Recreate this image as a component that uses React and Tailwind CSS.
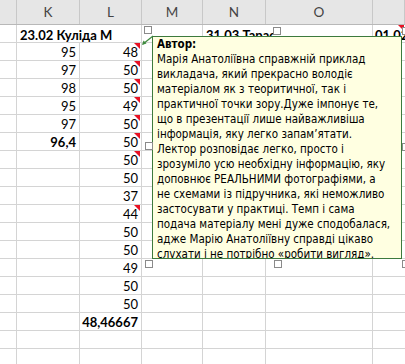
import React from 'react';

const COLS = [17, 63, 62, 61, 63, 107, 32];
const HEADERS = ['', 'K', 'L', 'M', 'N', 'O', ''];

// [K, L, hasComment, boldK, boldL]
const ROWS = [
  ['95', '48', true],
  ['97', '50', true],
  ['98', '50', true],
  ['95', '49', true],
  ['97', '50', true],
  ['96,4', '50', true, true],
  ['', '50', true],
  ['', '50'],
  ['', '37'],
  ['', '44', true],
  ['', '50'],
  ['', '50'],
  ['', '49'],
  ['', '50'],
  ['', '50'],
  ['', '48,46667', false, false, true],
  ['', ''],
  ['', ''],
];

const COMMENT = [
  'Марія Анатоліївна справжній приклад',
  'викладача, який прекрасно володіє',
  'матеріалом як з теоритичної, так і',
  'практичної точки зору.Дуже імпонує те,',
  'що в презентації лише найважливіша',
  'інформація, яку легко запам’ятати.',
  'Лектор розповідає легко, просто і',
  'зрозуміло усю необхідну інформацію, яку',
  'доповнює РЕАЛЬНИМИ фотографіями, а',
  'не схемами із підручника, які неможливо',
  'застосувати у практиці. Темп і сама',
  'подача матеріалу мені дуже сподобалася,',
  'адже Марію Анатоліївну справді цікаво',
  'слухати і не потрібно «робити вигляд».',
];

const cellFont = { fontFamily: 'Lato, "Liberation Sans", sans-serif' };

const RedMark = () => (
  <span className="absolute top-0 right-[1px] w-0 h-0 border-t-[6px] border-t-[#e81123] border-l-[6px] border-l-transparent" />
);

const Handle = ({ className }) => (
  <div className={`absolute w-[8px] h-[8px] bg-white border border-[#8a8a8a] ${className}`} />
);

export default function App() {
  return (
    <div className="relative w-[405px] h-[364px] overflow-hidden bg-white text-black" style={cellFont}>
      {/* column headers */}
      <div className="flex h-[25px] bg-[#e6e6e6] border-b border-[#b8b8b8]">
        {COLS.map((w, i) => (
          <div
            key={i}
            style={{ width: w }}
            className="shrink-0 border-r border-[#c8c8c8] flex items-center justify-center text-[13.5px] text-[#444]"
          >
            {HEADERS[i]}
          </div>
        ))}
      </div>

      {/* first row with titles */}
      <div className="flex h-[18px] text-[13px] font-bold leading-[21px]">
        <div className="w-[17px] shrink-0 border-r border-b border-[#d4d4d4]" />
        <div className="w-[125px] shrink-0 border-r border-b border-[#d4d4d4] pl-[3px] whitespace-nowrap">
          23.02 Куліда М
        </div>
        <div className="w-[61px] shrink-0 border-r border-b border-[#d4d4d4]" />
        <div className="w-[170px] shrink-0 border-r border-b border-[#d4d4d4] pl-[3px] whitespace-nowrap">
          31.03 Тарас
        </div>
        <div className="relative w-[32px] shrink-0 border-b border-[#d4d4d4] pl-[2px] whitespace-nowrap overflow-hidden">
          01.02 Ко
          <RedMark />
        </div>
      </div>

      {/* data rows */}
      {ROWS.map(([k, l, mark, boldK, boldL], r) => (
        <div key={r} className="flex h-[18px] text-[13px] leading-[19px]">
          <div className="w-[17px] shrink-0 border-r border-b border-[#d4d4d4]" />
          <div className={`w-[63px] shrink-0 border-r border-b border-[#d4d4d4] text-right pr-[3px] ${boldK ? 'font-bold' : ''}`}>
            {k}
          </div>
          <div className={`relative w-[62px] shrink-0 border-r border-b border-[#d4d4d4] text-right pr-[3px] ${boldL ? 'font-bold' : ''}`}>
            {l}
            {mark && <RedMark />}
          </div>
          <div className="w-[61px] shrink-0 border-r border-b border-[#d4d4d4]" />
          <div className="w-[63px] shrink-0 border-r border-b border-[#d4d4d4]" />
          <div className="w-[107px] shrink-0 border-r border-b border-[#d4d4d4]" />
          <div className="w-[32px] shrink-0 border-b border-[#d4d4d4]" />
        </div>
      ))}

      {/* comment arrow */}
      <svg className="absolute left-[140px] top-[34px]" width="16" height="14" viewBox="0 0 16 14">
        <line x1="3" y1="10" x2="13" y2="2" stroke="#3f8a3f" strokeWidth="1.2" />
        <polygon points="2,11 3.5,6.5 6.5,9.5" fill="#3f8a3f" />
      </svg>

      {/* comment box */}
      <div
        className="absolute left-[152px] top-[36px] w-[250px] h-[223px] overflow-hidden bg-[#ffffe1] border border-[#3d7a3d] pl-[4px] text-[11.5px] leading-[15px] text-black"
        style={{ fontFamily: '"DejaVu Sans Condensed", Tahoma, "DejaVu Sans", sans-serif' }}
      >
        <div className="font-bold">Автор:</div>
        {COMMENT.map((line, i) => (
          <div key={i} className="whitespace-nowrap">
            {line}
          </div>
        ))}
      </div>

      {/* selection handles */}
      <Handle className="left-[144px] top-[26px]" />
      <Handle className="left-[273px] top-[27px]" />
      <Handle className="left-[402px] top-[27px]" />
      <Handle className="left-[145px] top-[142px]" />
      <Handle className="left-[402px] top-[143px]" />
      <Handle className="left-[145px] top-[260px]" />
      <Handle className="left-[274px] top-[260px]" />
      <Handle className="left-[402px] top-[260px]" />
    </div>
  );
}
